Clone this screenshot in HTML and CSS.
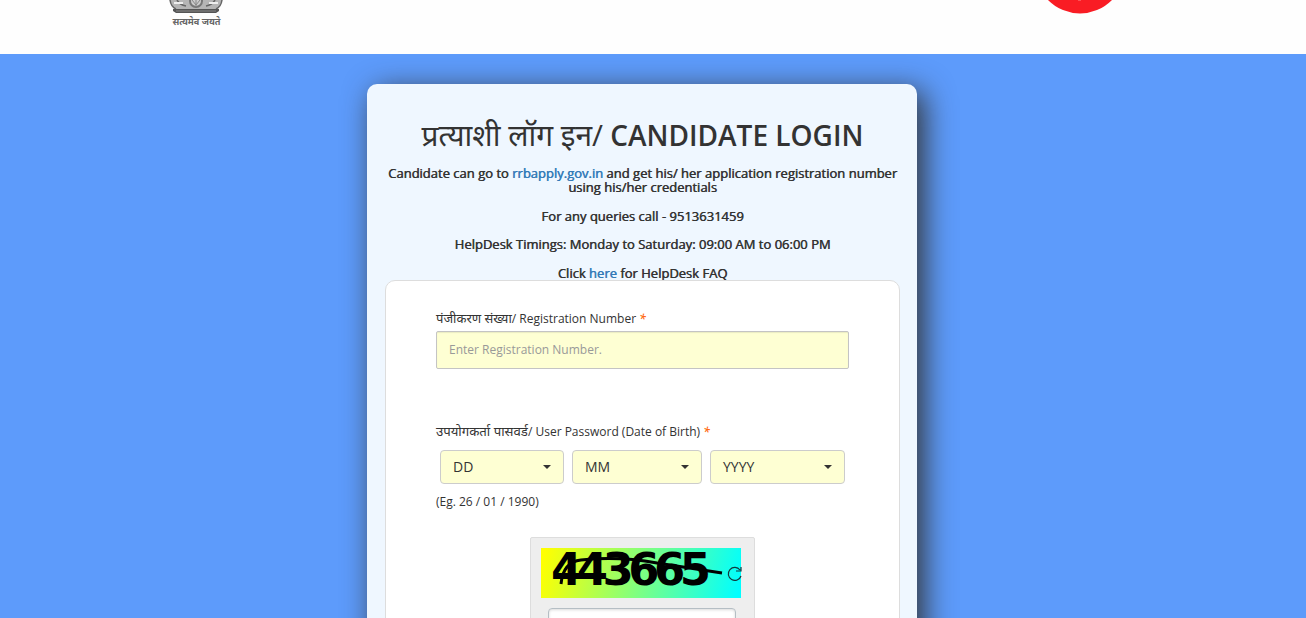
FILE: index.html
```
<!DOCTYPE html>
<html lang="en">
<head>
    <meta charset="UTF-8">
    <meta name="viewport" content="width=device-width, initial-scale=1.0">
    <title>Candidate Login</title>
    <link rel="stylesheet" href="styles.css">
</head>
<body>

    <header class="header">
        <div class="emblem">
            <svg width="56" height="15" viewBox="0 0 56 15">
                <path d="M2 0H54L50 9H6Z" fill="#b5b5b5"/>
                <path d="M2 0Q3 7 8 9M54 0Q53 7 48 9M9 0Q12 5 18 6M47 0Q44 5 38 6" fill="none" stroke="#666" stroke-width="1.5"/>
                <path d="M6 3H15M41 3H50" stroke="#eee" stroke-width="2"/>
                <circle cx="28" cy="1" r="6" fill="#ccc" stroke="#777" stroke-width="2"/>
                <path d="M28 0V7M24 0L28 5L32 0" fill="none" stroke="#888"/>
                <path d="M5 9H51V11L48 13H8L5 11Z" fill="#555"/>
                <path d="M8 11H48" stroke="#888"/>
            </svg>
            <span class="motto">सत्यमेव जयते</span>
        </div>
        <svg class="rail-logo" width="90" height="14" viewBox="0 0 90 14">
            <circle cx="45" cy="-31" r="44.5" fill="#f91c24"/>
            <path d="M43 0H46" stroke="#f88" stroke-width="1"/>
        </svg>
    </header>

    <main class="login-card">
        <h1><span class="title-hi">प्रत्याशी लॉग इन/</span> <span class="title-en">CANDIDATE LOGIN</span></h1>
        <div class="info">
            <p>Candidate can go to <a href="#">rrbapply.gov.in</a> and get his/ her application registration number using his/her credentials</p>
            <p>For any queries call - 9513631459</p>
            <p>HelpDesk Timings: Monday to Saturday: 09:00 AM to 06:00 PM</p>
            <p>Click <a href="#">here</a> for HelpDesk FAQ</p>
        </div>

        <form class="login-form">
            <label for="regNo"><span class="hindi">पंजीकरण संख्या</span>/ Registration Number <em>*</em></label>
            <input type="text" id="regNo" class="reg-input" placeholder="Enter Registration Number.">

            <label class="dob-label"><span class="hindi">उपयोगकर्ता पासवर्ड</span>/ User Password (Date of Birth) <em>*</em></label>
            <div class="dob">
                <button type="button" class="select day">DD<i class="caret"></i></button>
                <button type="button" class="select month">MM<i class="caret"></i></button>
                <button type="button" class="select year">YYYY<i class="caret"></i></button>
            </div>
            <p class="hint">(Eg. 26 / 01 / 1990)</p>

            <div class="captcha">
                <svg class="captcha-image" width="200" height="50" viewBox="0 0 200 50">
                    <text class="captcha-text" x="10" y="37" textLength="160" lengthAdjust="spacing">443665</text>
                    <path d="M20 36Q22 14 40 12Q78 8 116 15L181 25" fill="none" stroke="#000" stroke-width="3"/>
                    <path d="M199 22A6.5 6.5 0 1 0 200 28M200 19V23H195" fill="none" stroke="#12383c" stroke-width="1.2"/>
                </svg>
                <input type="text" class="captcha-input">
            </div>
        </form>
    </main>

</body>
</html>
```
FILE: styles.css
```
* {
    box-sizing: border-box;
}

html {
    height: 618px;
    overflow: hidden;
}

body {
    margin: 0;
    height: 618px;
    overflow: hidden;
    background-color: #5d9bfb;
    color: #333;
    font-family: "Open Sans", "Noto Sans", sans-serif;
    font-size: 12px;
}

.header {
    display: flex;
    justify-content: space-between;
    align-items: flex-start;
    height: 54px;
    padding: 0 181px 0 168px;
    background-color: #fefefe;
}

.emblem {
    display: flex;
    flex-direction: column;
    align-items: center;
}

.emblem svg,
.rail-logo {
    display: block;
}

.motto {
    margin-left: 1px;
    font-size: 9.2px;
    line-height: 13px;
    font-weight: 700;
    color: #666;
}

.login-card {
    width: 550px;
    height: 600px;
    margin: 30px 0 0 367px;
    padding: 31px 17px 0 18px;
    background-color: #eff7ff;
    border-radius: 10px;
    box-shadow: 7px 7px 30px #333;
}

h1 {
    margin: 0;
    height: 51px;
    font-size: 28px;
    line-height: 40px;
    font-weight: 400;
    text-align: center;
    white-space: nowrap;
}

.title-hi {
    font-size: 29.9px;
}

.title-en {
    font-weight: 600;
}

.info {
    height: 114px;
    font-size: 13px;
    line-height: 14.3px;
    text-align: center;
    text-shadow: 0.5px 0 currentColor;
}

.info p {
    margin: 0 0 14.3px;
}

a {
    color: #337ab7;
    text-decoration: none;
}

.login-form {
    height: 400px;
    position: relative;
    padding: 27px 50px 0;
    background-color: #fff;
    border: 1px solid #ddd;
    border-radius: 10px;
}

label {
    display: block;
    height: 23px;
    line-height: 20px;
}

label em {
    color: #ff6a13;
    font-weight: 600;
}

.hindi {
    font-size: 13px;
}

.reg-input {
    display: block;
    width: 413px;
    height: 38px;
    padding: 0 12px 2px;
    background-color: #feffd3;
    border: 1px solid #c4c4c4;
    border-radius: 2px;
    box-shadow: inset 0 1px 1px rgba(0, 0, 0, 0.08);
    font: inherit;
}

.reg-input::placeholder {
    color: #999;
}

.dob-label {
    margin-top: 52px;
}

.dob-label .hindi {
    font-size: 13.2px;
}

.dob {
    display: flex;
    gap: 8px;
    margin: 6px 0 0 4px;
}

.select {
    display: flex;
    justify-content: space-between;
    align-items: center;
    height: 34px;
    padding: 0 12px 2px;
    background-color: #feffd3;
    border: 1px solid #ccc;
    border-radius: 4px;
    color: #333;
    font: inherit;
    font-size: 14px;
}

.day {
    width: 124px;
}

.month {
    width: 130px;
}

.year {
    width: 135px;
}

.caret {
    margin-top: 2px;
    border-top: 4px solid #333;
    border-left: 4px solid transparent;
    border-right: 4px solid transparent;
}

.hint {
    margin: 8px 0 0;
    line-height: 20px;
}

.captcha {
    width: 225px;
    height: 130px;
    margin: 25px 0 0 94px;
    padding: 10px;
    background-color: #eee;
    border: 1px solid #ddd;
    border-radius: 2px;
}

.captcha-image {
    display: block;
    overflow: visible;
    background: linear-gradient(104deg, #ff0 2%, #0ff 98%);
}

.captcha-text {
    font-family: "DejaVu Sans", sans-serif;
    font-size: 45px;
    font-weight: 700;
}

.captcha-input {
    display: block;
    width: 188px;
    height: 34px;
    margin: 10px 0 0 7px;
    background-color: #fff;
    border: 1px solid #b5bec4;
    border-radius: 4px;
    box-shadow: inset 0 1px 3px rgba(0, 0, 0, 0.15);
}
```
